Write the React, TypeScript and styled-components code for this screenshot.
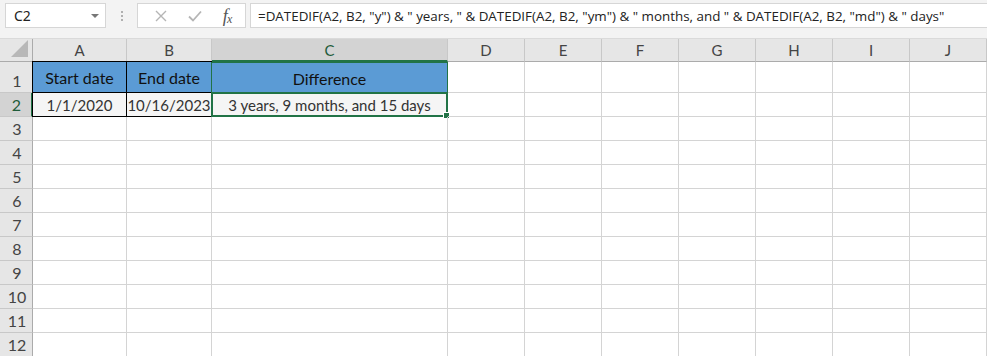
import React from "react";
import styled, { createGlobalStyle, css } from "styled-components";

const Global = createGlobalStyle`
  html, body { margin: 0; padding: 0; background: #ffffff; }
  body { width: 987px; height: 356px; overflow: hidden; }
`;

const GREEN = "#217346";
const GRID = "#d4d4d4";

const Page = styled.div`
  width: 987px;
  height: 356px;
  overflow: hidden;
  display: flex;
  flex-direction: column;
`;

const Bar = styled.div`
  height: 39px;
  flex: none;
  background: #f3f3f3;
  display: flex;
  align-items: flex-start;
  padding-top: 3px;
  box-sizing: border-box;
  border-bottom: 1px solid #dadada;
`;

const Box = styled.div`
  height: 25px;
  box-sizing: border-box;
  background: #ffffff;
  border: 1px solid #d6d6d6;
  display: flex;
  align-items: center;
`;

const NameBox = styled(Box)`
  margin-left: 5px;
  width: 101px;
  padding: 0 0 0 8px;
  justify-content: space-between;
  font-family: "Noto Sans", "Open Sans", sans-serif;
  font-size: 14px;
  color: #222;
`;

const Caret = styled.span`
  width: 0;
  height: 0;
  border-left: 4px solid transparent;
  border-right: 4px solid transparent;
  border-top: 4px solid #777;
  margin-right: 6px;
`;

const Dots = styled.div`
  width: 31px;
  height: 25px;
  display: flex;
  flex-direction: column;
  align-items: center;
  justify-content: center;
  gap: 2px;
  & > span {
    width: 2px;
    height: 2px;
    background: #b0b0b0;
  }
`;

const FnBox = styled(Box)`
  width: 109px;
  justify-content: space-around;
  padding: 0 4px 0 6px;
`;

const Fx = styled.span`
  font-family: "Liberation Serif", "DejaVu Serif", serif;
  font-style: italic;
  font-size: 18px;
  color: #555;
  letter-spacing: -1px;
  line-height: 1;
  & > sub {
    font-size: 12px;
    vertical-align: -1px;
  }
`;

const FormulaInput = styled(Box)`
  margin-left: 4px;
  flex: 1;
  border-right: none;
  padding-left: 7px;
  font-family: "Open Sans", "Noto Sans", sans-serif;
  font-size: 13.4px;
  color: #222;
  white-space: nowrap;
  overflow: hidden;
`;

const Sheet = styled.div`
  display: grid;
  grid-template-columns: 33px 94px 85px 236px repeat(7, 77px);
  grid-template-rows: 23px 31px repeat(11, 24px);
  font-family: "Lato", "Open Sans", sans-serif;
`;

const Corner = styled.div`
  background: #e6e6e6;
  border-right: 1px solid #ababab;
  border-bottom: 1px solid #ababab;
  box-sizing: border-box;
  display: flex;
  align-items: flex-end;
  justify-content: flex-end;
  padding: 0 4px 4px 0;
  & > span {
    width: 0;
    height: 0;
    border-left: 17px solid transparent;
    border-bottom: 17px solid #b8b8b8;
  }
`;

const ColHead = styled.div<{ $active?: boolean }>`
  box-sizing: border-box;
  background: ${(p) => (p.$active ? "#d3d3d3" : "#e6e6e6")};
  border-right: 1px solid #c8c8c8;
  border-bottom: ${(p) => (p.$active ? `2px solid ${GREEN}` : "1px solid #ababab")};
  display: flex;
  align-items: center;
  justify-content: center;
  font-size: 15px;
  color: ${(p) => (p.$active ? "#1f5c3a" : "#444")};
`;

const RowHead = styled.div<{ $active?: boolean; $bottom?: boolean }>`
  box-sizing: border-box;
  background: ${(p) => (p.$active ? "#d3d3d3" : "#e6e6e6")};
  border-right: ${(p) => (p.$active ? `2px solid ${GREEN}` : "1px solid #ababab")};
  border-bottom: 1px solid #c8c8c8;
  display: flex;
  align-items: ${(p) => (p.$bottom ? "flex-end" : "center")};
  justify-content: center;
  padding-bottom: ${(p) => (p.$bottom ? "2px" : "0")};
  padding-left: 2px;
  font-size: 16px;
  color: ${(p) => (p.$active ? "#1f5c3a" : "#444")};
`;

const Cell = styled.div<{
  $fill?: "head" | "data";
  $black?: boolean;
  $sel?: "head" | "cell";
}>`
  position: relative;
  box-sizing: border-box;
  border-right: 1px solid ${GRID};
  border-bottom: 1px solid ${GRID};
  display: flex;
  align-items: center;
  justify-content: center;
  font-size: 15px;
  color: #333;
  white-space: nowrap;
  ${(p) =>
    p.$fill === "head" &&
    css`
      background: #5b9bd5;
      color: #111;
      font-size: 16px;
      padding-top: 1px;
    `}
  ${(p) =>
    p.$fill === "data" &&
    css`
      background: #f5f5f5;
    `}
  ${(p) =>
    p.$black &&
    css`
      border-right: 1px solid #000;
      border-bottom: 1px solid #000;
    `}
  ${(p) =>
    p.$sel === "head" &&
    css`
      border: 1px solid ${GREEN};
      border-bottom: 1px solid #000;
      margin-left: -1px;
    `}
  ${(p) =>
    p.$sel === "cell" &&
    css`
      border: 2px solid ${GREEN};
      margin: -1px 0 0 -1px;
      padding-top: 1px;
    `}
`;

const BlackLeft = styled(Cell)`
  border-left: 1px solid #000;
  margin-left: -1px;
`;

const Handle = styled.span`
  position: absolute;
  right: -4px;
  bottom: -4px;
  width: 5px;
  height: 5px;
  background: ${GREEN};
  border: 1px solid #fff;
`;

const cols = ["A", "B", "C", "D", "E", "F", "G", "H", "I", "J"];

export default function App() {
  const emptyRows = [3, 4, 5, 6, 7, 8, 9, 10, 11, 12];
  return (
    <Page>
      <Global />
      <Bar>
        <NameBox>
          C2
          <Caret />
        </NameBox>
        <Dots>
          <span />
          <span />
          <span />
        </Dots>
        <FnBox>
          <svg width="14" height="14" viewBox="0 0 14 14">
            <path d="M2 2 L12 12 M12 2 L2 12" stroke="#b5b5b5" strokeWidth="1.4" fill="none" />
          </svg>
          <svg width="16" height="14" viewBox="0 0 16 14">
            <path d="M2 7.5 L6 11.5 L14 2.5" stroke="#b5b5b5" strokeWidth="1.8" fill="none" />
          </svg>
          <Fx>
            f<sub>x</sub>
          </Fx>
        </FnBox>
        <FormulaInput>
          =DATEDIF(A2, B2, "y") &amp; " years, " &amp; DATEDIF(A2, B2, "ym") &amp; " months, and " &amp;
          DATEDIF(A2, B2, "md") &amp; " days"
        </FormulaInput>
      </Bar>
      <Sheet>
        <Corner>
          <span />
        </Corner>
        {cols.map((c) => (
          <ColHead key={c} $active={c === "C"}>
            {c}
          </ColHead>
        ))}

        <RowHead $bottom>1</RowHead>
        <BlackLeft $fill="head" $black style={{ borderTop: "1px solid #000", marginTop: -1 }}>
          Start date
        </BlackLeft>
        <Cell $fill="head" $black style={{ borderTop: "1px solid #000", marginTop: -1 }}>
          End date
        </Cell>
        <Cell $fill="head" $sel="head">
          Difference
        </Cell>
        {cols.slice(3).map((c) => (
          <Cell key={"1" + c} />
        ))}

        <RowHead $active>2</RowHead>
        <BlackLeft $fill="data" $black>
          1/1/2020
        </BlackLeft>
        <Cell $fill="data" $black>
          10/16/2023
        </Cell>
        <Cell $fill="data" $sel="cell">
          3 years, 9 months, and 15 days
          <Handle />
        </Cell>
        {cols.slice(3).map((c) => (
          <Cell key={"2" + c} />
        ))}

        {emptyRows.map((r) => (
          <React.Fragment key={r}>
            <RowHead>{r}</RowHead>
            {cols.map((c) => (
              <Cell key={r + c} />
            ))}
          </React.Fragment>
        ))}
      </Sheet>
    </Page>
  );
}
